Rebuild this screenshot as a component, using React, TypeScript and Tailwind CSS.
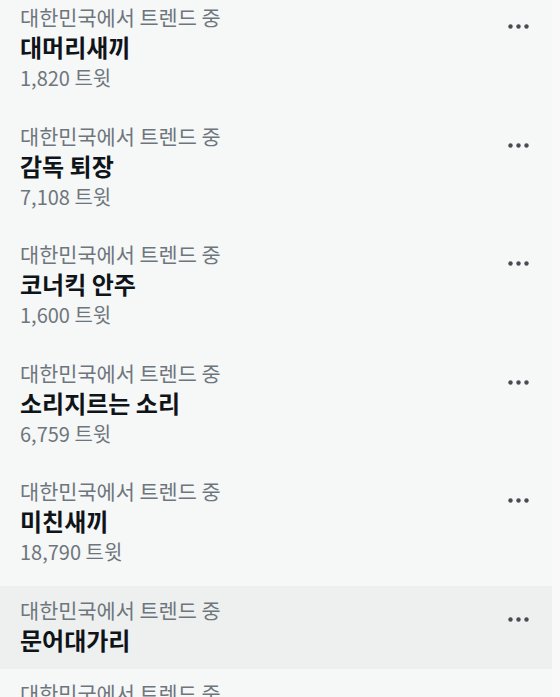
const TRENDS = [
  { title: "대머리새끼", count: "1,820 트윗" },
  { title: "감독 퇴장", count: "7,108 트윗" },
  { title: "코너킥 안주", count: "1,600 트윗" },
  { title: "소리지르는 소리", count: "6,759 트윗" },
  { title: "미친새끼", count: "18,790 트윗" },
  { title: "문어대가리", count: null, hover: true },
  { title: "", count: null },
];

function Dots() {
  return (
    <svg width="21" height="5" viewBox="0 0 21 5" className="mt-[21px] shrink-0">
      <circle cx="2.5" cy="2.5" r="2.2" fill="#474d53" />
      <circle cx="10.5" cy="2.5" r="2.2" fill="#474d53" />
      <circle cx="18.5" cy="2.5" r="2.2" fill="#474d53" />
    </svg>
  );
}

export default function App() {
  return (
    <div
      className="w-[560px] h-[697px] overflow-hidden bg-[#f9f9f9] flex"
      style={{ fontFamily: '"Noto Sans CJK KR", "Noto Sans", sans-serif' }}
    >
      <div className="w-[552px] bg-[#f6f7f7] flex flex-col -mt-[7px]">
        {TRENDS.map((item, i) => (
          <div
            key={i}
            className={
              "flex items-start justify-between pl-[20px] pr-[23px] pt-[10px] shrink-0 " +
              (item.hover ? "bg-[#eef0f0] pb-[13px]" : "pb-[18.5px]")
            }
          >
            <div className="flex flex-col">
              <span className="text-[20.8px] leading-[28px] text-[#6e767d]">대한민국에서 트렌드 중</span>
              {item.title && (
                <span className="text-[24px] leading-[32px] font-bold text-[#0f1419]">{item.title}</span>
              )}
              {item.count && (
                <span className="text-[20px] leading-[30px] text-[#6e767d]">{item.count}</span>
              )}
            </div>
            <Dots />
          </div>
        ))}
      </div>
    </div>
  );
}
